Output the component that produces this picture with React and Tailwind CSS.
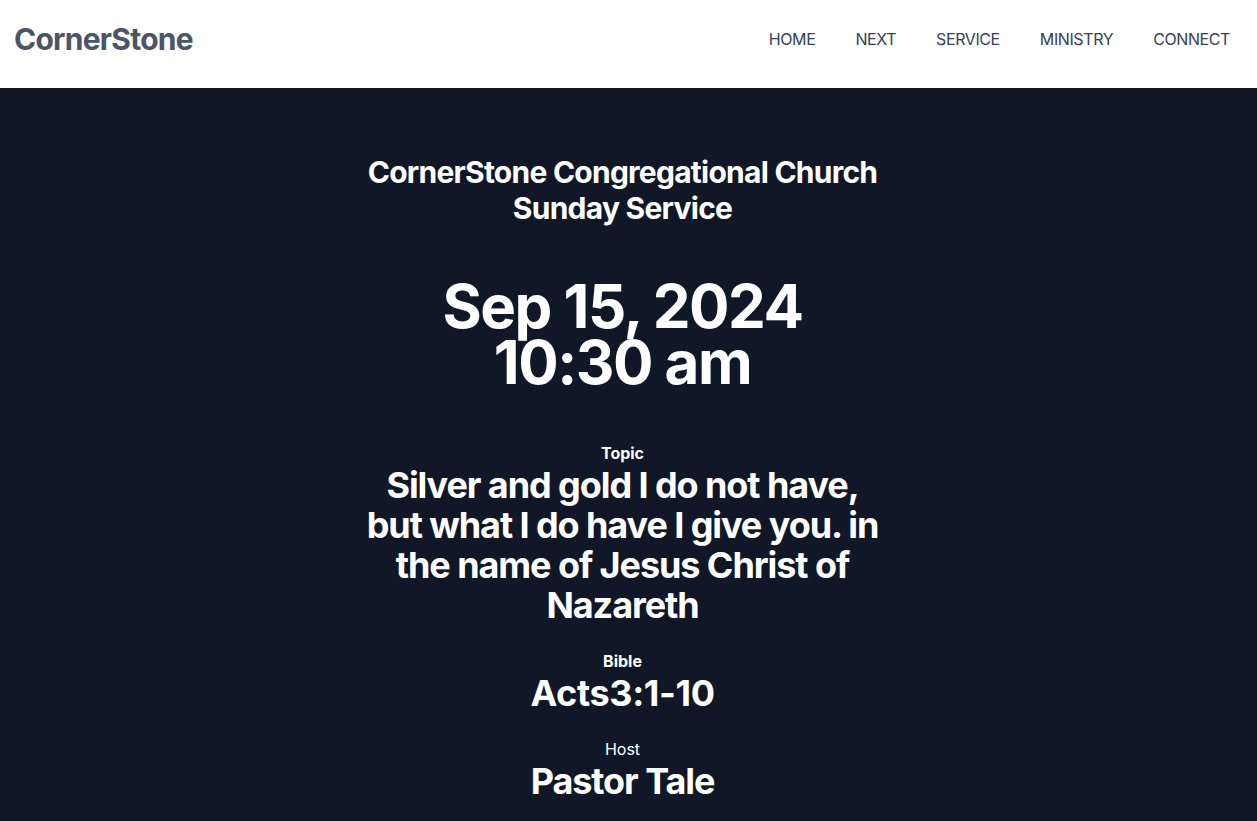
import React from 'react';

const navItems = ['HOME', 'NEXT', 'SERVICE', 'MINISTRY', 'CONNECT'];

const Field = ({ label, value, labelBold = true, valueClass = 'tracking-tight' }) => (
  <div className="flex flex-col items-center">
    <span className={`text-base text-white ${labelBold ? 'font-bold' : 'font-normal'}`}>{label}</span>
    <span className={`text-4xl font-bold text-white leading-10 ${valueClass}`}>{value}</span>
  </div>
);

export default function App() {
  return (
    <div className="min-h-screen bg-gray-900" style={{ fontFamily: 'Inter, "Noto Sans", sans-serif' }}>
      {/* Top bar */}
      <header className="h-[88px] bg-white flex items-start justify-between pl-[14px] pr-[27px] pt-[21px]">
        <div className="h-9 flex items-center">
          <a className="text-3xl font-bold text-gray-600 tracking-tight">CornerStone</a>
        </div>
        <nav className="h-9 flex items-center gap-10 text-base text-gray-700 tracking-tight">
          {navItems.map((item) => (
            <a key={item}>{item}</a>
          ))}
        </nav>
      </header>

      {/* Service info */}
      <div className="pr-3">
        <main className="max-w-lg mx-auto flex flex-col items-center text-center pt-[66px] pb-16">
          <h1 className="text-3xl font-bold text-white leading-9 tracking-tight">
            CornerStone Congregational Church
            <br />
            Sunday Service
          </h1>

          <div className="mt-[52px] text-6xl font-bold text-white leading-[56px] tracking-tight">
            <div>Sep 15, 2024</div>
            <div>10:30 am</div>
          </div>

          <div className="mt-[51px] flex flex-col gap-6">
            <Field
              label="Topic"
              value="Silver and gold I do not have, but what I do have I give you. in the name of Jesus Christ of Nazareth"
              valueClass="tracking-[-0.03em]"
            />
            <Field label="Bible" value="Acts3:1-10" valueClass="tracking-[-0.01em]" />
            <Field label="Host" value="Pastor Tale" labelBold={false} valueClass="tracking-[-0.03em]" />
          </div>
        </main>
      </div>
    </div>
  );
}
